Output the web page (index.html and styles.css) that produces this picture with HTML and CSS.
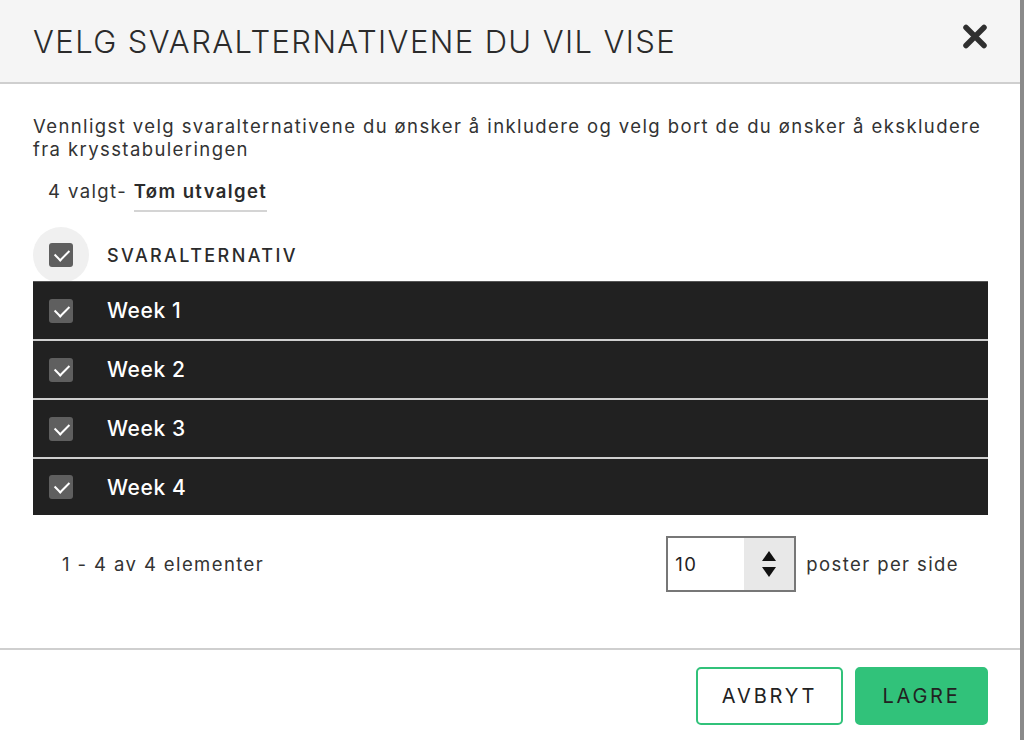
FILE: index.html
```html
<!DOCTYPE html>
<html lang="nb">

<head>
    <meta charset="UTF-8">
    <meta name="viewport" content="width=device-width, initial-scale=1.0">
    <title>Velg svaralternativene</title>
    <link rel="stylesheet" href="styles.css">
</head>

<body>
    <div class="dialog">
        <!-- header with title and close button -->
        <div class="dialog-header">
            <h1>VELG SVARALTERNATIVENE DU VIL VISE</h1>
            <button class="close" aria-label="Lukk">
                <svg width="26" height="25" viewBox="0 0 26 25">
                    <path d="M4 3.5 L22 21.5 M22 3.5 L4 21.5" stroke="#2f2f2f" stroke-width="5.5" stroke-linecap="round" />
                </svg>
            </button>
        </div>

        <div class="dialog-body">
            <p class="intro">Vennligst velg svaralternativene du ønsker å inkludere og velg bort de du ønsker å ekskludere
                fra krysstabuleringen</p>
            <div class="selected">4 valgt- <a href="#" class="clear">Tøm utvalget</a></div>

            <div class="table-head">
                <span class="check-wrap"><span class="check"></span></span>
                <span class="col-title">SVARALTERNATIV</span>
            </div>
            <ul class="rows">
                <li><span class="check"></span>Week 1</li>
                <li><span class="check"></span>Week 2</li>
                <li><span class="check"></span>Week 3</li>
                <li><span class="check"></span>Week 4</li>
            </ul>

            <!-- pager -->
            <div class="pager">
                <span class="count">1 - 4 av 4 elementer</span>
                <div class="per-page">
                    <div class="spin">
                        <span class="spin-value">10</span>
                        <span class="spin-arrows">
                            <svg width="16" height="30" viewBox="0 0 16 30">
                                <path d="M8 2 L15 12 L1 12 Z" fill="#111" />
                                <path d="M1 18 L15 18 L8 28 Z" fill="#111" />
                            </svg>
                        </span>
                    </div>
                    <span>poster per side</span>
                </div>
            </div>
        </div>

        <div class="dialog-footer">
            <button class="btn btn-outline">AVBRYT</button>
            <button class="btn btn-green">LAGRE</button>
        </div>
    </div>
</body>

</html>
```

FILE: styles.css
```css
body {
    background: #8a8a8a;
    color: #333;
    font-family: Inter, "Noto Sans", sans-serif;
    margin: 0;
    padding: 0;
}

.dialog {
    width: 1020px;
    height: 740px;
    background-color: #ffffff;
    display: flex;
    flex-direction: column;
}

.dialog-header {
    height: 82px;
    background: #f5f5f5;
    border-bottom: 2px solid #cfcfcf;
    display: flex;
    align-items: center;
    justify-content: space-between;
    padding: 0 32px 0 33px;
}

.dialog-header h1 {
    margin: 0;
    font-size: 31px;
    font-weight: 300;
    letter-spacing: 1.4px;
    color: #2b2b2b;
}

.close {
    background: none;
    border: none;
    padding: 0;
    margin-bottom: 10px;
    cursor: pointer;
    display: flex;
}

.dialog-body {
    padding: 31px 32px 0 33px;
    height: 566px;
    box-sizing: border-box;
    border-bottom: 2px solid #cfcfcf;
}

.intro {
    margin: 0;
    font-size: 18.5px;
    line-height: 23px;
    letter-spacing: 1.4px;
}

.selected {
    margin: 19px 0 0 15px;
    font-size: 18.5px;
    line-height: 22px;
    letter-spacing: 1.4px;
}

.clear {
    display: inline-block;
    color: #2b2b2b;
    font-weight: 600;
    text-decoration: none;
    padding-bottom: 8px;
    border-bottom: 2px solid #d4d4d4;
}

.table-head {
    display: flex;
    align-items: center;
    height: 52px;
    margin-top: 17px;
}

.check-wrap {
    width: 56px;
    height: 56px;
    border-radius: 50%;
    background: #f0f0f0;
    display: flex;
    align-items: center;
    justify-content: center;
}

.check {
    width: 24px;
    height: 24px;
    border-radius: 3px;
    background: #5f5f5f;
    position: relative;
    flex-shrink: 0;
}

.check::after {
    content: "";
    position: absolute;
    left: 5px;
    top: 4px;
    width: 12px;
    height: 7px;
    border-left: 2px solid #fff;
    border-bottom: 2px solid #fff;
    transform: translate(1px, 2px) rotate(-45deg);
    transform-origin: center;
}

.col-title {
    margin-left: 18px;
    font-size: 18px;
    font-weight: 500;
    letter-spacing: 2.4px;
    color: #2b2b2b;
}

.rows {
    list-style: none;
    margin: 0;
    padding: 0;
    border-top: 1px solid #555;
    position: relative;
}

.rows li {
    height: 57px;
    background: #212121;
    color: #fff;
    display: flex;
    align-items: center;
    padding-left: 16px;
    font-size: 21px;
    font-weight: 500;
    letter-spacing: 0.6px;
    border-bottom: 2px solid #cfcfcf;
}

.rows li:last-child {
    border-bottom: none;
    height: 56px;
}

.rows li .check {
    margin-right: 34px;
}

.pager {
    display: flex;
    align-items: center;
    justify-content: space-between;
    margin-top: 21px;
    padding: 0 29px 0 29px;
    font-size: 18.5px;
    letter-spacing: 1.4px;
}

.per-page {
    display: flex;
    align-items: center;
    gap: 10px;
}

.spin {
    width: 126px;
    height: 52px;
    border: 2px solid #777;
    display: flex;
    background: #fff;
}

.spin-value {
    flex: 1;
    display: flex;
    align-items: center;
    padding-left: 7px;
    color: #222;
}

.spin-arrows {
    width: 50px;
    background: #e8e8e8;
    display: flex;
    align-items: center;
    justify-content: center;
}

.dialog-footer {
    flex: 1;
    display: flex;
    justify-content: flex-end;
    gap: 12px;
    padding: 17px 32px 0 0;
}

.btn {
    height: 58px;
    border-radius: 5px;
    font-family: Inter, "Noto Sans", sans-serif;
    font-size: 20px;
    letter-spacing: 2.8px;
    color: #222;
    cursor: pointer;
}

.btn-outline {
    width: 147px;
    background: #fff;
    border: 2px solid #31c27a;
}

.btn-green {
    width: 133px;
    background: #31c27a;
    border: 2px solid #31c27a;
}
```
